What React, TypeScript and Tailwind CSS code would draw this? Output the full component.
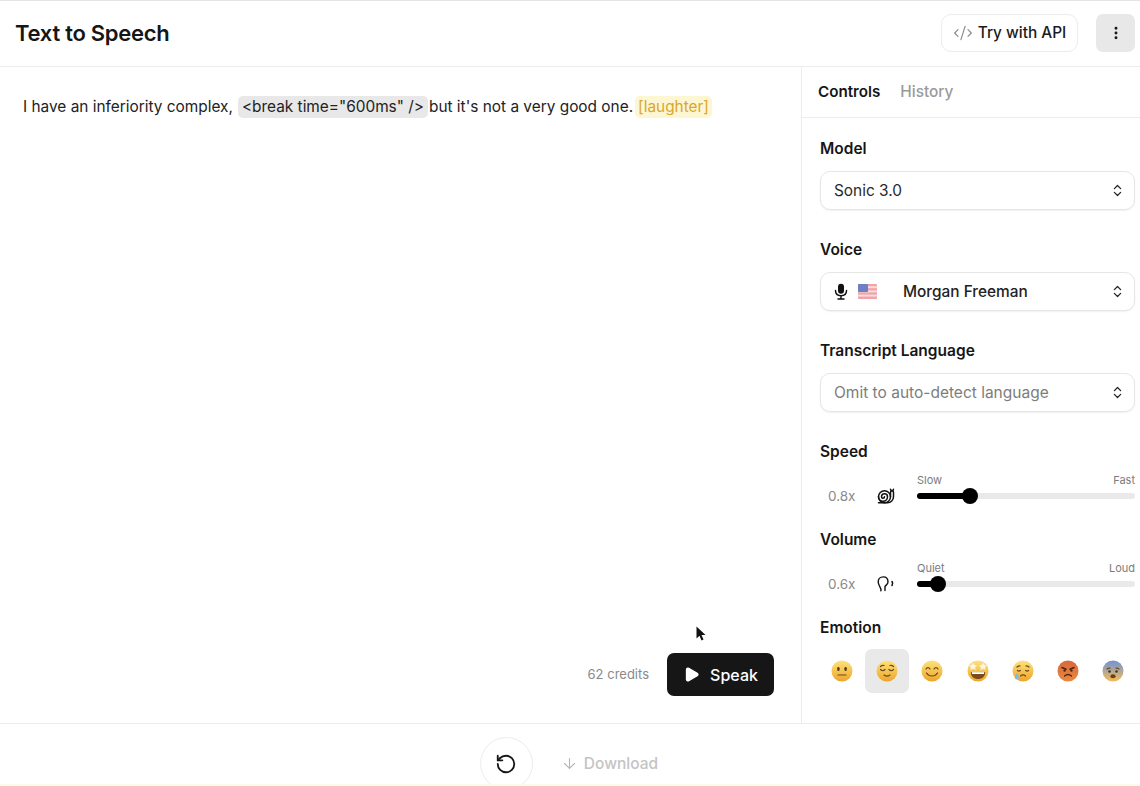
import { ArrowDown, ChevronsUpDown, CodeXml, EllipsisVertical, Play, RotateCcw, Snail } from "lucide-react";
import type { ReactNode } from "react";

function SelectBox({ children }: { children: ReactNode }) {
  return (
    <div className="mt-[12px] flex h-[39px] w-[315px] items-center justify-between rounded-[10px] border border-[#e6e6e6] bg-white pl-[13px] pr-[9px] shadow-[0_1px_2px_rgba(0,0,0,0.06)]">
      <div className="flex min-w-0 items-center">{children}</div>
      <ChevronsUpDown size={15} className="text-[#222]" strokeWidth={2} />
    </div>
  );
}

function FieldLabel({ children }: { children: ReactNode }) {
  return <div className="h-[20px] text-[15.5px] leading-[20px] font-semibold text-[#161616]">{children}</div>;
}

function Flag() {
  return (
    <svg width="19" height="15" viewBox="0 0 19 15">
      <rect width="19" height="15" rx="1" fill="#f0a3a8" />
      <rect y="2.2" width="19" height="2" fill="#f7dcdc" />
      <rect y="6.4" width="19" height="2" fill="#f7dcdc" />
      <rect y="10.6" width="19" height="2" fill="#f7dcdc" />
      <rect width="10" height="8" rx="0.8" fill="#6f7fc4" />
    </svg>
  );
}

function MicIcon() {
  return (
    <svg width="14" height="17" viewBox="0 0 14 17" fill="none" stroke="#111" strokeWidth="1.5" strokeLinecap="round">
      <rect x="4" y="0.8" width="6" height="10" rx="3" fill="#111" stroke="none" />
      <path d="M1.500 7.500c0 3.400 2.400 5.200 5.500 5.200s5.500-1.800 5.500-5.200M7 12.700V16M4 16h6" />
    </svg>
  );
}

function EarIcon() {
  return (
    <svg width="18" height="16" viewBox="0 0 18 16" fill="none" stroke="#111" strokeWidth="1.4" strokeLinecap="round">
      <path d="M3.800 14.800C5.400 13 1.200 10 1.200 6C1.200 3 3.300 0.900 6.200 0.900C9.100 0.900 11 3 11 6C11 8.500 8.800 9 8 10.500L8 14.600" />
      <path d="M15 5.600C15.900 6.800 15.900 8.200 15 9.400" strokeWidth="1.6" />
    </svg>
  );
}

function SliderRow({
  value,
  icon,
  left,
  right,
  percent,
}: {
  value: string;
  icon: ReactNode;
  left: string;
  right: string;
  percent: number;
}) {
  return (
    <div className="mt-[11px] flex items-end">
      <div className="flex h-[16px] w-[97px] items-center">
        <span className="ml-[8px] w-[49px] text-[13.5px] text-[#8a8a8a]">{value}</span>
        <span className="flex w-[18px] justify-center">{icon}</span>
      </div>
      <div className="w-[218px]">
        <div className="flex justify-between text-[11px] leading-[14px] text-[#7c7c7c]">
          <span>{left}</span>
          <span>{right}</span>
        </div>
        <div className="relative mt-[1px] flex h-[16px] items-center">
          <div className="h-[6px] w-full rounded-full bg-[#e9e9e9]" />
          <div className="absolute left-0 h-[6px] rounded-full bg-black" style={{ width: `${percent}%` }} />
          <div
            className="absolute h-[16px] w-[16px] -translate-x-1/2 rounded-full bg-black"
            style={{ left: `${percent}%` }}
          />
        </div>
      </div>
    </div>
  );
}

function Face({ id, children, from = "#fde27a", to = "#eda52c" }: { id: string; children: ReactNode; from?: string; to?: string }) {
  return (
    <svg width="22" height="22" viewBox="0 0 22 22" fill="none" strokeLinecap="round">
      <defs>
        <linearGradient id={id} x1="0" y1="0" x2="0" y2="1">
          <stop offset="0" stopColor={from} />
          <stop offset="1" stopColor={to} />
        </linearGradient>
      </defs>
      <circle cx="11" cy="11" r="10.500" fill={`url(#${id})`} />
      {children}
    </svg>
  );
}

const line = { stroke: "#6b4a1c", strokeWidth: 1.2 };

function Emojis() {
  return (
    <div className="mt-[11px] flex h-[44px] w-[316px] items-center">
      <div className="flex w-[45px] justify-center">
        <Face id="f1">
          <rect x="6.200" y="7" width="2.400" height="4" rx="1.200" fill="#5a3d17" />
          <rect x="13.400" y="7" width="2.400" height="4" rx="1.200" fill="#5a3d17" />
          <path d="M7 15h8" {...line} />
        </Face>
      </div>
      <div className="flex h-[44px] w-[44px] items-center justify-center rounded-[7px] bg-[#e9e9e9]">
        <Face id="f2">
          <path d="M4.500 9.500c1.500 1.400 3 1.400 4.500 0M13 9.500c1.500 1.400 3 1.400 4.500 0" {...line} />
          <path d="M4.500 6.500c1-1 2.400-1.300 3.600-1M17.500 6.500c-1-1-2.400-1.300-3.600-1" {...line} />
          <path d="M8 15c2 1.500 4 1.500 6 0" {...line} />
        </Face>
      </div>
      <div className="flex w-[47px] justify-center">
        <Face id="f3">
          <path d="M5 9c1-1.800 3-1.800 4 0M13 9c1-1.800 3-1.800 4 0" {...line} />
          <path d="M5.500 13c2.500 4 8.500 4 11 0" {...line} />
        </Face>
      </div>
      <div className="flex w-[44px] justify-center">
        <Face id="f4">
          <path d="M6 2l1.500 2.700 3 .5-2.200 2.100.5 3-2.800-1.400-2.800 1.400.5-3L1.500 5.200l3-.5z" fill="#fff6dc" stroke="#e9cf8f" strokeWidth="0.5" />
          <path d="M16 2l1.500 2.700 3 .5-2.200 2.100.5 3-2.800-1.400-2.800 1.400.5-3-2.200-2.100 3-.5z" fill="#fff6dc" stroke="#e9cf8f" strokeWidth="0.5" />
          <path d="M3.800 12.200h14.400c0 4.400-3 6.800-7.200 6.800s-7.200-2.400-7.200-6.800z" fill="#7a4a1c" />
          <path d="M5 12.200h12v1.800H5z" fill="#fff" />
        </Face>
      </div>
      <div className="flex w-[47px] justify-center">
        <Face id="f5">
          <path d="M5 7c1-.9 2-1.200 3-1.200M17 7c-1-.9-2-1.200-3-1.200" {...line} />
          <path d="M5.400 10.500c1 .8 2 .8 3 0M13.600 10.500c1 .8 2 .8 3 0" {...line} />
          <path d="M8.500 16c1.700-1.400 3.300-1.400 5 0" {...line} />
          <path d="M4.800 13c1.300 2 1.900 3.200 1.900 4.400a1.900 1.900 0 0 1-3.800 0c0-1.200.7-2.400 1.900-4.400z" fill="#7fb7ea" />
        </Face>
      </div>
      <div className="flex w-[44px] justify-center">
        <Face id="f6" from="#d9673c" to="#e8893f">
          <path d="M5 7.500l4 1.800M17 7.500l-4 1.800" stroke="#4f2410" strokeWidth="1.500" />
          <circle cx="7.600" cy="10.600" r="1.200" fill="#4f2410" />
          <circle cx="14.400" cy="10.600" r="1.200" fill="#4f2410" />
          <path d="M7.500 16c2.300-2 4.700-2 7 0" stroke="#4f2410" strokeWidth="1.300" />
        </Face>
      </div>
      <div className="flex w-[46px] justify-center">
        <Face id="f7" from="#6f92d8" to="#f4bd55">
          <circle cx="7.500" cy="11.500" r="1.300" fill="#4b3316" />
          <circle cx="14.500" cy="11.500" r="1.300" fill="#4b3316" />
          <path d="M5 9c1-.8 2-1 3-.9M17 9c-1-.8-2-1-3-.9" {...line} />
          <ellipse cx="11" cy="16.300" rx="2.600" ry="2" fill="#6d3f16" />
        </Face>
      </div>
    </div>
  );
}

function ControlsPanel() {
  return (
    <aside className="flex w-[339px] shrink-0 flex-col border-l border-[#ececec]">
      <div className="flex h-[51px] items-center gap-[20px] border-b border-[#ececec] pl-[16px] text-[15.200px] font-semibold">
        <span className="text-[#161616]">Controls</span>
        <span className="text-[15.400px] font-medium text-[#9a9a9a]">History</span>
      </div>
      <div className="flex flex-col pl-[18px] pt-[21px]">
        <FieldLabel>Model</FieldLabel>
        <SelectBox>
          <span className="text-[15.400px] text-[#2a2a2a]">Sonic 3.0</span>
        </SelectBox>

        <div className="mt-[30px]">
          <FieldLabel>Voice</FieldLabel>
          <SelectBox>
            <MicIcon />
            <span className="ml-[10px] flex"><Flag /></span>
            <span className="ml-[26px] text-[15.400px] font-medium text-[#222]">Morgan Freeman</span>
          </SelectBox>
        </div>

        <div className="mt-[30px]">
          <FieldLabel>Transcript Language</FieldLabel>
          <SelectBox>
            <span className="text-[15.500px] text-[#7d7d7d]">Omit to auto-detect language</span>
          </SelectBox>
        </div>

        <div className="mt-[30px]">
          <FieldLabel>Speed</FieldLabel>
          <SliderRow
            value="0.8x"
            icon={<Snail size={18} className="text-[#111]" />}
            left="Slow"
            right="Fast"
            percent={24.500}
          />
        </div>

        <div className="mt-[26px]">
          <FieldLabel>Volume</FieldLabel>
          <SliderRow value="0.6x" icon={<EarIcon />} left="Quiet" right="Loud" percent={9.600} />
        </div>

        <div className="mt-[26px]">
          <FieldLabel>Emotion</FieldLabel>
          <Emojis />
        </div>
      </div>
    </aside>
  );
}

export default function App() {
  return (
    <div
      className="relative flex h-[786px] w-[1140px] flex-col overflow-hidden border-t border-[#e4e4e4] bg-white text-[#161616]"
      style={{ fontFamily: "Inter, 'Liberation Sans', sans-serif" }}
    >
      <header className="flex h-[66px] shrink-0 items-center justify-between border-b border-[#ececec] pb-[1px] pl-[15px] pr-[5px]">
        <h1 className="text-[22px] font-semibold tracking-[-0.280px]">Text to Speech</h1>
        <div className="flex items-center gap-[18px]">
          <button
            type="button"
            className="flex h-[38px] w-[137px] items-center justify-center gap-[5px] rounded-[10px] border border-[#ececec] text-[15.400px] font-medium text-[#1b1b1b]"
          >
            <CodeXml size={20} strokeWidth={1.400} className="text-[#8a8a8a]" />
            Try with API
          </button>
          <button type="button" className="flex h-[38px] w-[39px] items-center justify-center rounded-[7px] bg-[#e8e8e8]">
            <EllipsisVertical size={16} strokeWidth={2.400} className="text-[#161616]" />
          </button>
        </div>
      </header>

      <div className="flex min-h-0 flex-1">
        <main className="flex min-w-0 flex-1 flex-col justify-between pb-[27px] pl-[23px] pr-[27px] pt-[27px]">
          <p className="flex h-[26px] items-center whitespace-nowrap text-[15.400px] text-[#222]">
            I have an inferiority complex,
            <span className="ml-[5px] rounded-[5px] bg-[#e8e8e8] px-[4px] py-[1px] leading-[20px]">{'<break time="600ms" />'}</span>
            <span className="ml-[1px]">but it's not a very good one.</span>
            <span className="ml-[2px] rounded-[5px] bg-[#fdf6d3] px-[3px] py-[1px] leading-[20px] text-[#d9a72c]">[laughter]</span>
          </p>
          <div className="flex items-center justify-end gap-[18px]">
            <span className="text-[13px] text-[#8a8a8a]">62 credits</span>
            <button
              type="button"
              className="flex h-[43px] w-[107px] items-center justify-center gap-[10px] rounded-[7px] bg-[#161616] text-[16px] font-medium text-white"
            >
              <Play size={17} fill="#fff" className="text-white" />
              Speak
            </button>
          </div>
        </main>
        <ControlsPanel />
      </div>

      <footer className="flex h-[63px] shrink-0 justify-center overflow-hidden border-t border-[#ececec] border-b-2 border-b-[#fbfbea] pr-[2px] pt-[13px]">
        <div className="flex items-start">
          <button type="button" className="flex h-[53px] w-[53px] shrink-0 items-center justify-center rounded-full border border-[#ececec]">
            <RotateCcw size={22} strokeWidth={2} className="text-[#161616]" />
          </button>
          <span className="ml-[28px] flex h-[53px] items-center gap-[6px] text-[15.500px] font-medium text-[#c4c4c4]">
            <ArrowDown size={17} strokeWidth={1.500} className="text-[#b5b5b5]" />
            Download
          </span>
        </div>
      </footer>

      {/* mouse pointer caught in the shot */}
      <svg className="absolute left-[695px] top-[624px]" width="12" height="18" viewBox="0 0 12 18">
        <path d="M1.500 1.500v12l3-2.800 2 4.800 2-.9-2-4.600h4z" fill="#111" />
      </svg>
    </div>
  );
}
